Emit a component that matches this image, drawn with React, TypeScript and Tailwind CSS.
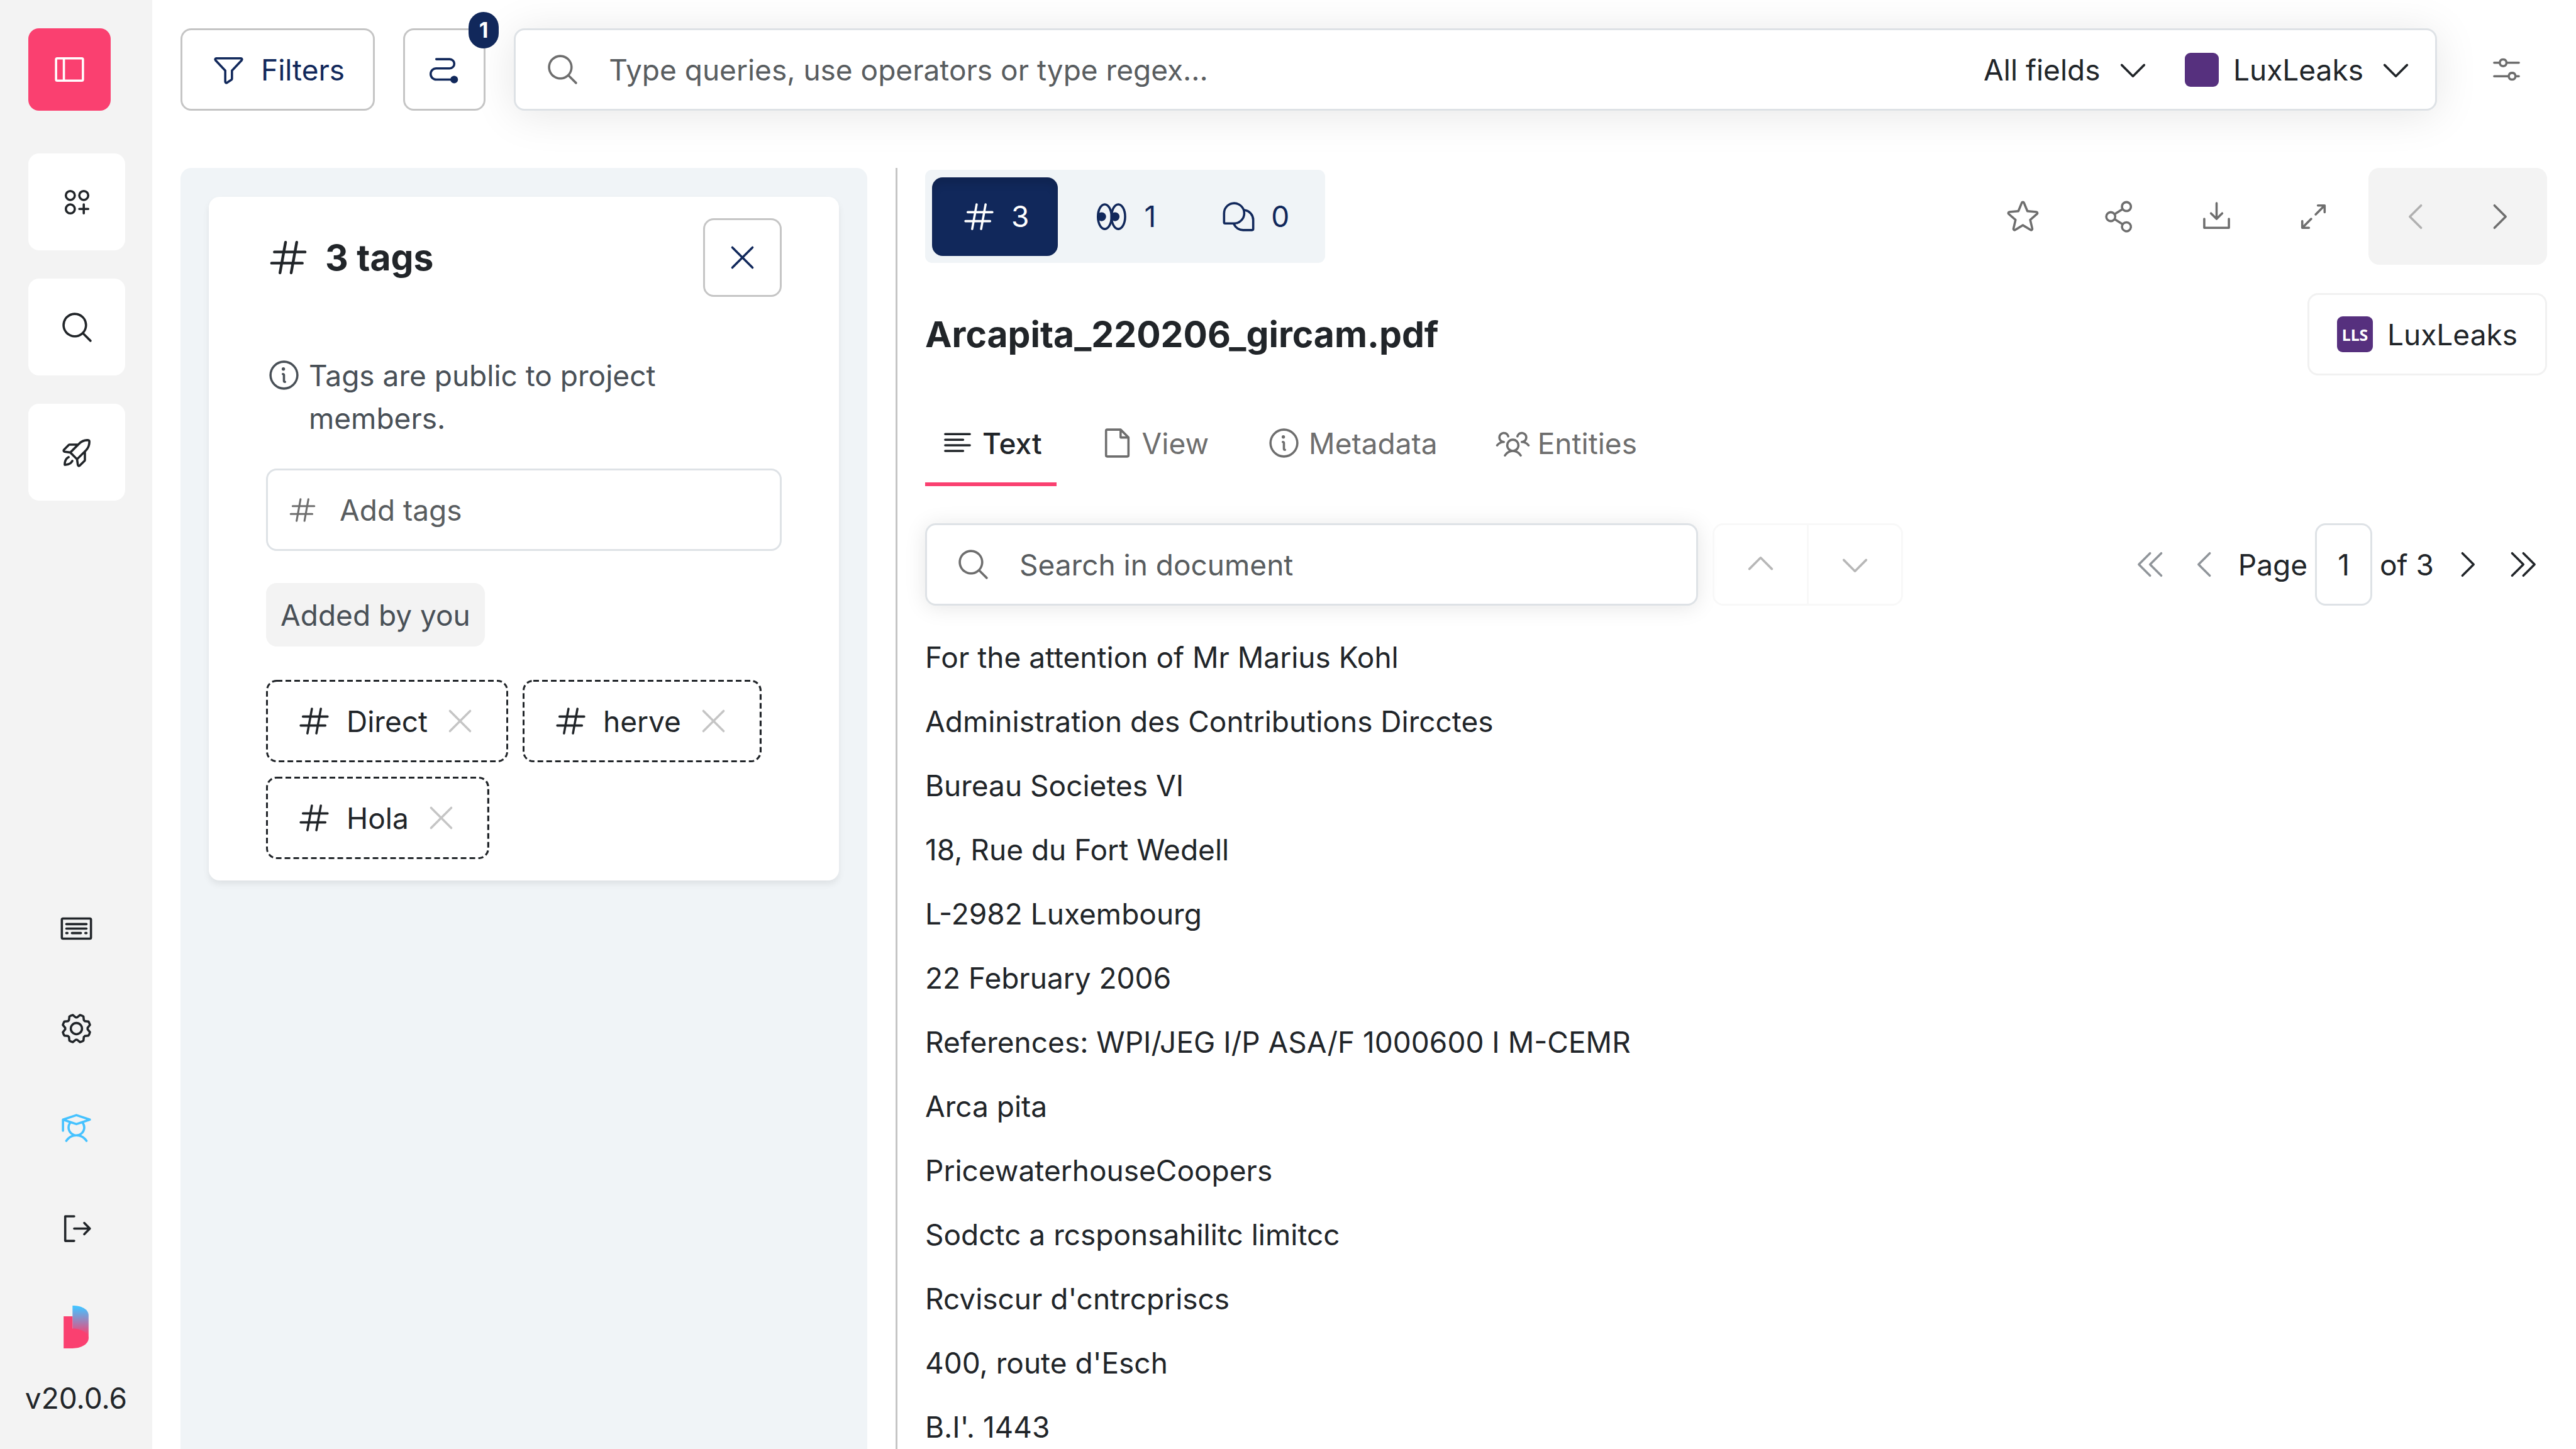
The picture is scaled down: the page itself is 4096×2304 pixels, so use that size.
import type { InputHTMLAttributes, ReactNode } from "react";
import type { IconType } from "react-icons";
import {
  PiArrowsOutSimple,
  PiCaretDoubleLeft,
  PiCaretDoubleRight,
  PiCaretDown,
  PiCaretLeft,
  PiCaretRight,
  PiCaretUp,
  PiChatsTeardrop,
  PiCirclesThreePlus,
  PiDownloadSimple,
  PiFile,
  PiFunnel,
  PiGear,
  PiHash,
  PiInfo,
  PiKeyboard,
  PiMagnifyingGlass,
  PiRocketLaunch,
  PiShareNetwork,
  PiSidebarSimple,
  PiSignOut,
  PiSlidersHorizontal,
  PiStar,
  PiStudent,
  PiTextAlignLeft,
  PiUsersThree,
  PiX,
} from "react-icons/pi";

const ICON = "size-[57px] shrink-0";

const documentLines = [
  "For the attention of Mr Marius Kohl",
  "Administration des Contributions Dircctes",
  "Bureau Societes VI",
  "18, Rue du Fort Wedell",
  "L-2982 Luxembourg",
  "22 February 2006",
  "References: WPI/JEG I/P ASA/F 1000600 I M-CEMR",
  "Arca pita",
  "PricewaterhouseCoopers",
  "Sodctc a rcsponsahilitc limitcc",
  "Rcviscur d'cntrcpriscs",
  "400, route d'Esch",
  "B.I'. 1443",
];

const tags = ["Direct", "herve", "Hola"];

function PathIcon() {
  return (
    <svg viewBox="0 0 80 80" className={ICON} fill="none" stroke="currentColor" strokeWidth="5" strokeLinecap="round" aria-hidden="true">
      <path d="M22 17H52a10.2 10.2 0 0 1 0 20.5H22a12.4 12.4 0 0 0 0 25H62" />
      <circle cx="62" cy="62.5" r="8.5" fill="currentColor" stroke="none" />
    </svg>
  );
}

function EyesIcon({ className }: { className?: string }) {
  return (
    <svg viewBox="0 0 80 80" className={className} fill="none" stroke="currentColor" strokeWidth="5" aria-hidden="true">
      <defs>
        <clipPath id="eye-left">
          <ellipse cx="24.7" cy="40" rx="15.2" ry="27.5" />
        </clipPath>
        <clipPath id="eye-right">
          <ellipse cx="55" cy="40" rx="15.2" ry="27.5" />
        </clipPath>
      </defs>
      <circle cx="17.7" cy="40" r="10" fill="currentColor" stroke="none" clipPath="url(#eye-left)" />
      <circle cx="47.7" cy="40" r="10" fill="currentColor" stroke="none" clipPath="url(#eye-right)" />
      <ellipse cx="24.7" cy="40" rx="15.2" ry="27.5" />
      <ellipse cx="55" cy="40" rx="15.2" ry="27.5" />
    </svg>
  );
}

function Logo() {
  return (
    <svg viewBox="0 0 56 96" className="h-[68px] w-[40px]" aria-hidden="true">
      <defs>
        <linearGradient id="logo-fold" x1="0" y1="0" x2="0" y2="1">
          <stop offset="0.05" stopColor="#45c2ff" />
          <stop offset="0.9" stopColor="#fa4070" />
        </linearGradient>
      </defs>
      <path d="M20 0C40 0 56 8 56 22V74L20 52Z" fill="url(#logo-fold)" />
      <path d="M0 24H20V51.5C40 51.5 56 62 56 73.5C56 86 40 96 20 96H0Z" fill="#fa4070" />
    </svg>
  );
}

function SideTile({ icon: Icon, label }: { icon: IconType; label: string }) {
  return (
    <button aria-label={label} className="flex size-[154px] items-center justify-center rounded-[17px] bg-white">
      <Icon className={ICON} />
    </button>
  );
}

function SideLink({ icon: Icon, label, className = "" }: { icon: IconType; label: string; className?: string }) {
  return (
    <button aria-label={label} className={`flex size-[114px] items-center justify-center ${className}`}>
      <Icon className={ICON} />
    </button>
  );
}

function Sidebar() {
  return (
    <nav className="flex w-[242px] shrink-0 flex-col bg-[#f3f3f3] pt-[45px] pb-[47px]">
      <div className="flex flex-col items-start pl-[45px]">
        <button aria-label="Toggle sidebar" className="flex size-[131px] items-center justify-center rounded-[17px] bg-[#fa4070] text-white">
          <PiSidebarSimple className={ICON} />
        </button>
        <div className="mt-[68px] flex flex-col gap-[45px]">
          <SideTile icon={PiCirclesThreePlus} label="Projects" />
          <SideTile icon={PiMagnifyingGlass} label="Search" />
          <SideTile icon={PiRocketLaunch} label="Tasks" />
        </div>
      </div>
      <div className="mt-auto flex flex-col items-center">
        <div className="flex flex-col gap-[45px]">
          <SideLink icon={PiKeyboard} label="Keyboard shortcuts" />
          <SideLink icon={PiGear} label="Settings" />
          <SideLink icon={PiStudent} label="Guided tour" className="text-[#45c2ff]" />
          <SideLink icon={PiSignOut} label="Sign out" />
        </div>
        <div className="mt-[66px]">
          <Logo />
        </div>
        <p className="mt-[45px]">v20.0.6</p>
      </div>
    </nav>
  );
}

function OutlineButton({ children, label, className }: { children: ReactNode; label?: string; className: string }) {
  return (
    <button
      aria-label={label}
      className={`flex items-center justify-center rounded-[17px] border-[3px] border-[#c5c5c5] bg-white text-[#11285b] ${className}`}
    >
      {children}
    </button>
  );
}

function FieldInput({ className = "", ...props }: InputHTMLAttributes<HTMLInputElement>) {
  return <input className={`min-w-0 bg-transparent outline-none placeholder:text-[#595d60] placeholder:opacity-100 ${className}`} {...props} />;
}

function Dropdown({ label, value }: { label: string; value: string }) {
  return (
    <span className="flex items-center gap-[23px]">
      <select aria-label={label} className="appearance-none bg-transparent outline-none">
        <option>{value}</option>
      </select>
      <PiCaretDown className={ICON} />
    </span>
  );
}

function TopBar() {
  return (
    <header className="flex h-[131px] shrink-0 items-stretch gap-[45px]">
      <OutlineButton className="gap-[23px] px-[45px]">
        <PiFunnel className={ICON} />
        Filters
      </OutlineButton>
      <div className="relative">
        <OutlineButton label="Search breadcrumb" className="size-[131px]">
          <PathIcon />
        </OutlineButton>
        <span className="absolute -top-[26px] -right-[21px] flex h-[58px] w-[48px] items-center justify-center rounded-full bg-[#11285b] text-[34px] font-bold text-white">
          1
        </span>
      </div>
      <div className="flex flex-1 items-center rounded-[17px] border-[3px] border-[#dee2e6] bg-white pr-[34px] pl-[46px] shadow-[0_6px_68px_rgba(0,0,0,0.1)]">
        <PiMagnifyingGlass className={`${ICON} text-[#6e6e6e]`} />
        <FieldInput aria-label="Search documents" placeholder="Type queries, use operators or type regex..." className="ml-[45px] flex-1" />
        <Dropdown label="Field" value="All fields" />
        <div className="ml-[54px] flex items-center gap-[23px]">
          <span className="size-[54px] rounded-[9px] bg-[#56307e]" />
          <Dropdown label="Project" value="LuxLeaks" />
        </div>
      </div>
      <button aria-label="Search settings" className="flex w-[131px] items-center justify-center text-[#6e6e6e]">
        <PiSlidersHorizontal className={ICON} />
      </button>
    </header>
  );
}

function Tag({ name }: { name: string }) {
  return (
    <li className="relative flex h-[131px] items-center gap-[23px] overflow-hidden rounded-[17px] px-[48px]">
      <svg className="pointer-events-none absolute inset-0 size-full" fill="none" aria-hidden="true">
        <rect className="size-full" rx="17" stroke="#212529" strokeWidth="6" strokeDasharray="9 5" />
      </svg>
      <PiHash className={ICON} />
      {name}
      <button aria-label={`Remove ${name}`} className="text-[#c5c5c5]">
        <PiX className={ICON} />
      </button>
    </li>
  );
}

function TagsPanel() {
  return (
    <aside className="w-[1092px] shrink-0 rounded-t-[17px] bg-[#f0f4f7] px-[45px] pt-[46px]">
      <section className="rounded-[17px] bg-white px-[91px] py-[34px] shadow-[0_6px_11px_rgba(0,0,0,0.075)]">
        <div className="flex items-center justify-between">
          <h2 className="flex items-center gap-[23px] text-[57px] leading-[68px] font-bold">
            <PiHash className="size-[71px]" />3 tags
          </h2>
          <OutlineButton label="Close tags" className="size-[125px]">
            <PiX className={ICON} />
          </OutlineButton>
        </div>
        <p className="mt-[91px] flex items-start gap-[11px] text-[#495057]">
          <PiInfo className={`${ICON} mt-[5px]`} />
          <span className="w-[640px]">Tags are public to project members.</span>
        </p>
        <div className="mt-[46px] flex h-[131px] items-center rounded-[17px] border-[3px] border-[#dee2e6] px-[30px]">
          <PiHash className="size-[50px] shrink-0 text-[#6e6e6e]" />
          <FieldInput aria-label="Add tags" placeholder="Add tags" className="ml-[34px] flex-1" />
        </div>
        <h3 className="mt-[51px] flex h-[101px] w-fit items-center rounded-[17px] bg-[#f3f3f3] px-[23px] text-[#495057]">Added by you</h3>
        <ul className="mt-[53px] flex flex-wrap gap-[23px]">
          {tags.map((tag) => (
            <Tag key={tag} name={tag} />
          ))}
        </ul>
      </section>
    </aside>
  );
}

type CountIcon = (props: { className?: string }) => ReactNode;

function CountButton({ icon: Icon, count, label, active = false }: { icon: CountIcon; count: number; label: string; active?: boolean }) {
  return (
    <button
      aria-label={`${label}: ${count}`}
      aria-pressed={active}
      className={`flex h-[125px] items-center gap-[23px] rounded-[17px] px-[46px] ${
        active ? "bg-[#11285b] text-white shadow-[inset_0_9px_14px_rgba(0,0,0,0.125)]" : "text-[#11285b]"
      }`}
    >
      <Icon className={ICON} />
      {count}
    </button>
  );
}

function ActionButton({ icon: Icon, label }: { icon: IconType; label: string }) {
  return (
    <button aria-label={label} className="flex size-[154px] items-center justify-center">
      <Icon className={ICON} />
    </button>
  );
}

function Toolbar() {
  return (
    <div className="flex items-center justify-between">
      <div className="flex h-[148px] items-center gap-[11px] rounded-[11px] bg-[#f0f4f7] px-[11px]">
        <CountButton icon={PiHash} count={3} label="Tags" active />
        <CountButton icon={EyesIcon} count={1} label="Recommendations" />
        <CountButton icon={PiChatsTeardrop} count={0} label="Comments" />
      </div>
      <div className="flex items-center text-[#6e6e6e]">
        <ActionButton icon={PiStar} label="Star" />
        <ActionButton icon={PiShareNetwork} label="Share" />
        <ActionButton icon={PiDownloadSimple} label="Download" />
        <ActionButton icon={PiArrowsOutSimple} label="Expand" />
        <div className="ml-[11px] flex h-[154px] items-center rounded-[17px] bg-[#f3f3f3] px-[11px]">
          <button aria-label="Previous document" disabled className="flex size-[131px] items-center justify-center text-[#b0b0b0]">
            <PiCaretLeft className={ICON} />
          </button>
          <button aria-label="Next document" className="flex size-[131px] items-center justify-center">
            <PiCaretRight className={ICON} />
          </button>
        </div>
      </div>
    </div>
  );
}

function Tab({ icon: Icon, label, active = false }: { icon: IconType; label: string; active?: boolean }) {
  return (
    <button
      role="tab"
      aria-selected={active}
      className={`flex h-[131px] items-center gap-[11px] border-b-[6px] px-[23px] ${
        active ? "border-[#fa4070] font-medium text-[#212529]" : "border-transparent text-[#6e6e6e]"
      }`}
    >
      <Icon className={ICON} />
      {label}
    </button>
  );
}

function PagerButton({ icon: Icon, label, disabled = false }: { icon: IconType; label: string; disabled?: boolean }) {
  return (
    <button aria-label={label} disabled={disabled} className="flex h-[80px] w-[80px] items-center justify-center disabled:text-[#90959a]">
      <Icon className={ICON} />
    </button>
  );
}

function DocumentSearch() {
  return (
    <div className="mt-[59px] flex items-center">
      <div className="flex h-[131px] w-[1229px] items-center rounded-[17px] border-[3px] border-[#dee2e6] bg-white px-[45px] shadow-[0_3px_34px_rgba(0,0,0,0.1)]">
        <PiMagnifyingGlass className={`${ICON} text-[#6e6e6e]`} />
        <FieldInput aria-label="Search in document" placeholder="Search in document" className="ml-[45px] flex-1" />
      </div>
      <div className="ml-[23px] flex text-[#b7b7b7]">
        <button aria-label="Previous match" disabled className="flex h-[131px] w-[153px] items-center justify-center rounded-l-[17px] border-[3px] border-[#f8f8f8]">
          <PiCaretUp className={ICON} />
        </button>
        <button aria-label="Next match" disabled className="-ml-[3px] flex h-[131px] w-[153px] items-center justify-center rounded-r-[17px] border-[3px] border-[#f8f8f8]">
          <PiCaretDown className={ICON} />
        </button>
      </div>
      <div className="ml-auto flex items-center gap-[12px]">
        <div className="flex gap-[6px]">
          <PagerButton icon={PiCaretDoubleLeft} label="First page" disabled />
          <PagerButton icon={PiCaretLeft} label="Previous page" disabled />
        </div>
        <label htmlFor="page-number">Page</label>
        <input
          id="page-number"
          defaultValue="1"
          className="h-[131px] w-[91px] rounded-[17px] border-[3px] border-[#dee2e6] text-center outline-none"
        />
        <span>of 3</span>
        <div className="flex gap-2">
          <PagerButton icon={PiCaretRight} label="Next page" />
          <PagerButton icon={PiCaretDoubleRight} label="Last page" />
        </div>
      </div>
    </div>
  );
}

function DocumentView() {
  return (
    <main className="ml-[45px] flex min-w-0 flex-1 flex-col overflow-hidden border-l-[3px] border-[#c5c5c5] pr-[46px] pl-[44px]">
      <Toolbar />
      <div className="mt-[45px] flex items-center justify-between">
        <h1 className="text-[57px] leading-[68px] font-bold">Arcapita_220206_gircam.pdf</h1>
        <a href="#project" className="flex h-[131px] items-center gap-[23px] rounded-[17px] border-[3px] border-[#f1f1f1] px-[44px]">
          <span className="flex size-[57px] items-center justify-center rounded-[9px] bg-[#56307e] font-['Noto_Sans',sans-serif] text-[25px] font-bold text-white">
            LLS
          </span>
          LuxLeaks
        </a>
      </div>
      <div role="tablist" className="mt-[45px] flex gap-[45px]">
        <Tab icon={PiTextAlignLeft} label="Text" active />
        <Tab icon={PiFile} label="View" />
        <Tab icon={PiInfo} label="Metadata" />
        <Tab icon={PiUsersThree} label="Entities" />
      </div>
      <DocumentSearch />
      <article className="mt-[48px] flex flex-col gap-[34px]">
        {documentLines.map((line) => (
          <p key={line}>{line}</p>
        ))}
      </article>
    </main>
  );
}

export default function App() {
  return (
    <div className="flex h-screen overflow-hidden bg-white font-['Inter',sans-serif] text-[46px] leading-[68px] text-[#212529]">
      <Sidebar />
      <div className="flex min-w-0 flex-1 flex-col pt-[45px] pl-[45px]">
        <div className="pr-[45px]">
          <TopBar />
        </div>
        <div className="mt-[91px] flex min-h-0 flex-1">
          <TagsPanel />
          <DocumentView />
        </div>
      </div>
    </div>
  );
}
